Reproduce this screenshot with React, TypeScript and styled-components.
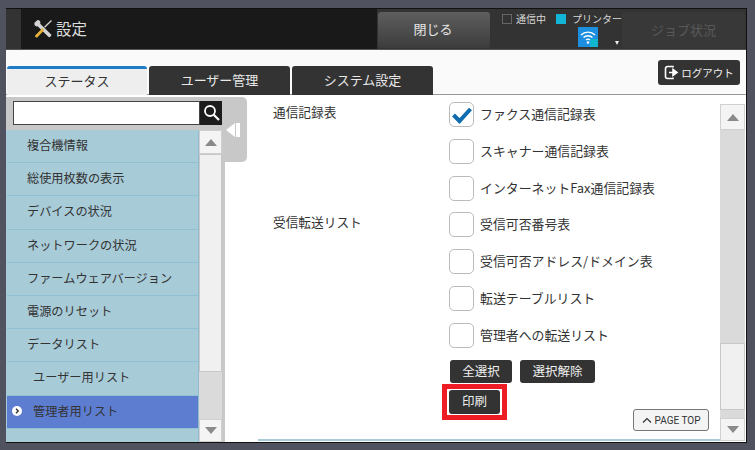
import styled, { createGlobalStyle } from 'styled-components'

const GlobalStyle = createGlobalStyle`
  html, body {
    margin: 0;
    padding: 0;
    background: #50525f;
    font-family: "Noto Sans CJK JP", "Liberation Sans", sans-serif;
  }
`

const menuItems = [
  { label: '複合機情報' },
  { label: '総使用枚数の表示' },
  { label: 'デバイスの状況' },
  { label: 'ネットワークの状況' },
  { label: 'ファームウェアバージョン' },
  { label: '電源のリセット' },
  { label: 'データリスト' },
  { label: 'ユーザー用リスト', sub: true },
  { label: '管理者用リスト', sub: true, active: true },
]

const sections = [
  { title: '通信記録表', items: ['ファクス通信記録表', 'スキャナー通信記録表', 'インターネットFax通信記録表'] },
  { title: '受信転送リスト', items: ['受信可否番号表', '受信可否アドレス/ドメイン表', '転送テーブルリスト', '管理者への転送リスト'] },
]

const Triangle = ({ down }: { down?: boolean }) => (
  <svg width="14" height="9" viewBox="0 0 14 9">
    <path d={down ? 'M1 1h12L7 8z' : 'M7 1l6 7H1z'} fill="#8a8a8a" />
  </svg>
)

const App = () => {
  return (
    <>
      <GlobalStyle />
      <Screen>
        <Header>
          <TitleArea>
            <svg width="20" height="20" viewBox="0 0 20 20">
              <path d="M1.5 3.8L4.2 1.2c1.6-.4 3.2.8 3.2 2.6l-.2.9 11 10.8c.8.9-1.6 3.4-2.6 2.6L4.6 7.2l-.9.2C2 7.4.9 5.6 1.5 3.8z" fill="#d4d4d4" />
              <path d="M2.2 16.6l7-7.4 2 2-7 7.2c-1 .7-2.8-.8-2-1.8z" fill="#e8b23a" />
              <path d="M11.5 8.2L18.5 1.5" stroke="#d4d4d4" strokeWidth="1.3" />
            </svg>
            <Title>設定</Title>
          </TitleArea>
          <HeaderRight>
            <CloseButton>閉じる</CloseButton>
            <Status>
              <StatusRow>
                <StatusBox />
                <StatusText>通信中</StatusText>
                <StatusBox $on />
                <StatusText>プリンター</StatusText>
              </StatusRow>
              <WifiRow>
                <svg width="20" height="20" viewBox="0 0 20 20">
                  <rect width="20" height="20" fill="#1d8fe0" />
                  <path d="M3 8a10 10 0 0 1 14 0M5.5 10.5a6.5 6.5 0 0 1 9 0M8 13a3 3 0 0 1 4 0" stroke="#fff" strokeWidth="1.4" fill="none" />
                  <circle cx="10" cy="15.5" r="1.3" fill="#fff" />
                  <rect x="12" y="12" width="8" height="8" fill="#12b5d0" />
                </svg>
                <Caret />
              </WifiRow>
            </Status>
            <JobButton>ジョブ状況</JobButton>
          </HeaderRight>
        </Header>

        <TabBar>
          <Tabs>
            <Tab $active>ステータス</Tab>
            <Tab>ユーザー管理</Tab>
            <Tab>システム設定</Tab>
          </Tabs>
          <LogoutButton>
            <svg width="15" height="15" viewBox="0 0 15 15">
              <path d="M9 2.5V1.5H3.5a2 2 0 0 0-2 2v8a2 2 0 0 0 2 2H9v-1" fill="none" stroke="#fff" strokeWidth="1.6" />
              <path d="M5 7.5h5M9 4.5l4 3-4 3z" stroke="#fff" strokeWidth="1.6" fill="#fff" />
            </svg>
            ログアウト
          </LogoutButton>
        </TabBar>

        <Body>
          <Sidebar>
            <SearchRow>
              <SearchInput />
              <SearchButton>
                <svg width="18" height="18" viewBox="0 0 18 18">
                  <circle cx="7" cy="7" r="5" fill="none" stroke="#fff" strokeWidth="1.8" />
                  <path d="M10.5 10.5l5.5 5.5" stroke="#fff" strokeWidth="2.2" />
                </svg>
              </SearchButton>
            </SearchRow>
            <MenuArea>
              <Menu>
                {menuItems.map((item) => (
                  <MenuItem key={item.label} $sub={item.sub} $active={item.active}>
                    {item.active && (
                      <ActiveMark>
                        <svg width="10" height="10" viewBox="0 0 10 10">
                          <circle cx="5" cy="5" r="5" fill="#fff" />
                          <path d="M4 2.8L6.2 5 4 7.2" stroke="#333" strokeWidth="1.4" fill="none" />
                        </svg>
                      </ActiveMark>
                    )}
                    {item.label}
                  </MenuItem>
                ))}
              </Menu>
              <MenuScroll>
                <ArrowButton><Triangle /></ArrowButton>
                <ScrollThumb $flex />
                <ScrollTrack $height={47} />
                <ArrowButton $bottom><Triangle down /></ArrowButton>
              </MenuScroll>
            </MenuArea>
          </Sidebar>
          <CollapseHandle>
            <svg width="14" height="14" viewBox="0 0 14 14">
              <path d="M9 0v14L0 7z" fill="#fff" />
              <rect x="10" y="0" width="4" height="14" fill="#fff" />
            </svg>
          </CollapseHandle>

          <Main>
            <Form>
              {sections.map((section) => (
                <Section key={section.title}>
                  <SectionTitle>{section.title}</SectionTitle>
                  <div>
                    {section.items.map((label, i) => (
                      <CheckRow key={label}>
                        <CheckBox>
                          {section.title === '通信記録表' && i === 0 && (
                            <svg width="22" height="18" viewBox="0 0 22 18">
                              <path d="M2.5 9l6 6L19.5 3" stroke="#0f6cb0" strokeWidth="4" fill="none" />
                            </svg>
                          )}
                        </CheckBox>
                        <CheckLabel>{label}</CheckLabel>
                      </CheckRow>
                    ))}
                  </div>
                </Section>
              ))}
              <Actions>
                <DarkButton>全選択</DarkButton>
                <DarkButton $wide>選択解除</DarkButton>
              </Actions>
              <PrintHighlight>
                <PrintButton>印刷</PrintButton>
              </PrintHighlight>
              <PageTop>
                <svg width="10" height="6" viewBox="0 0 10 6">
                  <path d="M1 5.5L5 1.5l4 4" stroke="#333" strokeWidth="1.2" fill="none" />
                </svg>
                PAGE TOP
              </PageTop>
              <BottomRule />
            </Form>
            <MainScroll>
              <ArrowButton $tall><Triangle /></ArrowButton>
              <ScrollTrack $flex />
              <ScrollThumb $height={67} />
              <ScrollTrack $height={8} />
              <ArrowButton $bottom><Triangle down /></ArrowButton>
            </MainScroll>
          </Main>
        </Body>
      </Screen>
    </>
  )
}

const Screen = styled.div`
  width: 741px;
  height: 435px;
  margin: 8px 0 0 6px;
  border-top: 1px solid #111;
  border-right: 1px solid #111;
  border-bottom: 1px solid #111;
  box-sizing: border-box;
  background: #fff;
  display: flex;
  flex-direction: column;
  overflow: hidden;
`

const Header = styled.div`
  height: 41px;
  flex-shrink: 0;
  display: flex;
  background: #333;
  border-bottom: 1px solid #555;
  box-sizing: border-box;
`

const TitleArea = styled.div`
  width: 356px;
  margin-left: 15px;
  background: #191919;
  display: flex;
  align-items: center;
  padding-left: 12px;
  gap: 3px;
  box-sizing: border-box;
`

const Title = styled.span`
  font-size: 15.5px;
  color: #dcdcdc;
  padding-bottom: 2px;
`

const HeaderRight = styled.div`
  flex: 1;
  display: flex;
  align-items: stretch;
  padding: 3px 1px 1px 0;
`

const CloseButton = styled.div`
  width: 112px;
  margin-left: 1px;
  padding: 0 2px 3px 0;
  box-sizing: border-box;
  border-radius: 3px;
  background: linear-gradient(#5e5e5e, #3c3c3c);
  color: #e6e6e6;
  font-size: 13px;
  display: flex;
  align-items: center;
  justify-content: center;
`

const Status = styled.div`
  width: 132px;
  padding-left: 12px;
  box-sizing: border-box;
`

const StatusRow = styled.div`
  display: flex;
  align-items: center;
  height: 15px;
  margin-top: -1px;
`

const StatusBox = styled.span<{ $on?: boolean }>`
  width: 10px;
  height: 10px;
  box-sizing: border-box;
  background: ${(props) => (props.$on ? '#12b5d6' : 'transparent')};
  border: 1px solid ${(props) => (props.$on ? '#12b5d6' : '#666')};
`

const StatusText = styled.span`
  font-size: 10px;
  color: #d8d8d8;
  margin: 0 10px 0 4px;
  white-space: nowrap;
  &:last-child {
    margin-right: 0;
    margin-left: 6px;
  }
`

const WifiRow = styled.div`
  display: flex;
  align-items: flex-end;
  padding: 1px 0 0 76px;
`

const Caret = styled.span`
  width: 0;
  height: 0;
  margin-left: 17px;
  margin-bottom: 2px;
  border-left: 2.5px solid transparent;
  border-right: 2.5px solid transparent;
  border-top: 4px solid #eee;
`

const JobButton = styled.div`
  flex: 1;
  padding-bottom: 2px;
  border-radius: 3px;
  background: #383838;
  color: #585858;
  font-size: 13px;
  display: flex;
  align-items: center;
  justify-content: center;
`

const TabBar = styled.div`
  height: 45px;
  flex-shrink: 0;
  display: flex;
  align-items: flex-end;
  justify-content: space-between;
  background: #fafafa;
  box-shadow: inset 0 -1px 0 #999;
  padding-right: 6px;
`

const Tabs = styled.div`
  display: flex;
  gap: 2px;
  padding-left: 1px;
`

const Tab = styled.div<{ $active?: boolean }>`
  width: ${(props) => (props.$active ? '140px' : '141px')};
  height: 29px;
  padding-bottom: ${(props) => (props.$active ? '3px' : '2px')};
  box-sizing: border-box;
  border-radius: 3px 3px 0 0;
  display: flex;
  align-items: center;
  justify-content: center;
  font-size: 13px;
  background: ${(props) => (props.$active ? '#eeeeee' : '#333333')};
  color: ${(props) => (props.$active ? '#333' : '#e8e8e8')};
  border-top: ${(props) => (props.$active ? '3px solid #1e7cc8' : 'none')};
`

const LogoutButton = styled.div`
  width: 82px;
  height: 25px;
  margin-bottom: 10px;
  box-sizing: border-box;
  border-radius: 3px;
  background: #333;
  color: #f0f0f0;
  font-size: 10.5px;
  display: flex;
  align-items: center;
  justify-content: center;
  gap: 2px;
`

const Body = styled.div`
  flex: 1;
  min-height: 0;
  display: flex;
  align-items: flex-start;
  padding-top: 2px;
  background: #fff;
`

const Sidebar = styled.div`
  width: 219px;
  height: 345px;
  flex-shrink: 0;
  display: flex;
  flex-direction: column;
  background: #c8c8c8;
`

const SearchRow = styled.div`
  height: 33px;
  flex-shrink: 0;
  display: flex;
  padding: 4px 0 0 7px;
  box-sizing: border-box;
`

const SearchInput = styled.div`
  width: 187px;
  height: 24px;
  box-sizing: border-box;
  background: #fff;
  border: 1px solid #444;
`

const SearchButton = styled.div`
  width: 23px;
  height: 24px;
  background: #1c1c1c;
  display: flex;
  align-items: center;
  justify-content: center;
`

const MenuArea = styled.div`
  flex: 1;
  min-height: 0;
  display: flex;
  padding-right: 3px;
`

const Menu = styled.div`
  width: 193px;
  background: #a8cbd8;
  padding-left: 1px;
  box-sizing: border-box;
  border-right: 1px solid #8fbdcf;
`

const MenuItem = styled.div<{ $sub?: boolean; $active?: boolean }>`
  position: relative;
  height: 33.2px;
  padding-bottom: 2px;
  box-sizing: border-box;
  display: flex;
  align-items: center;
  padding-left: ${(props) => (props.$sub ? '26px' : '20px')};
  font-size: 12.2px;
  color: #333;
  border-bottom: 1px solid #8fbfd0;
  background: ${(props) => (props.$active ? '#5d7dd1' : 'transparent')};
`

const ActiveMark = styled.span`
  position: absolute;
  left: 5px;
  top: 10px;
  display: flex;
`

const MenuScroll = styled.div`
  flex: 1;
  display: flex;
  flex-direction: column;
`

const ArrowButton = styled.div<{ $bottom?: boolean; $tall?: boolean }>`
  height: ${(props) => (props.$tall ? '26px' : props.$bottom ? '23px' : '24px')};
  flex-shrink: 0;
  box-sizing: border-box;
  background: #f4f4f4;
  border: 1px solid #d0d0d0;
  display: flex;
  align-items: center;
  justify-content: center;
`

const ScrollThumb = styled.div<{ $height?: number; $flex?: boolean }>`
  flex: ${(props) => (props.$flex ? 1 : 'none')};
  height: ${(props) => (props.$height ? `${props.$height}px` : 'auto')};
  box-sizing: border-box;
  background: #f0f0f0;
  border: 1px solid #c8c8c8;
`

const ScrollTrack = styled.div<{ $height?: number; $flex?: boolean }>`
  flex: ${(props) => (props.$flex ? 1 : 'none')};
  height: ${(props) => (props.$height ? `${props.$height}px` : 'auto')};
  background: #dadada;
`

const CollapseHandle = styled.div`
  width: 25px;
  height: 65px;
  flex-shrink: 0;
  margin-left: -3px;
  background: #c8c8c8;
  border-radius: 0 5px 5px 0;
  display: flex;
  justify-content: flex-start;
  padding: 26px 0 0 4px;
  box-sizing: border-box;
`

const Main = styled.div`
  flex: 1;
  min-width: 0;
  height: 100%;
  display: flex;
  padding: 0 1px 0 11px;
  box-sizing: border-box;
`

const Form = styled.div`
  position: relative;
  flex: 1;
  min-width: 0;
  height: 344px;
  padding: 5px 0 0 15px;
  box-sizing: border-box;
  background: #fff;
`

const Section = styled.div`
  display: flex;
`

const SectionTitle = styled.div`
  width: 176px;
  flex-shrink: 0;
  padding-top: 1px;
  font-size: 12.7px;
  line-height: 18px;
  color: #333;
`

const CheckRow = styled.div`
  height: 36.8px;
  display: flex;
  align-items: flex-start;
`

const CheckBox = styled.div`
  width: 25px;
  height: 25px;
  box-sizing: border-box;
  background: #fff;
  border: 1px solid #bbb;
  border-radius: 5px;
  display: flex;
  align-items: center;
  justify-content: center;
`

const CheckLabel = styled.span`
  margin-left: 6px;
  font-size: 12.9px;
  line-height: 24px;
  color: #333;
  white-space: nowrap;
`

const Actions = styled.div`
  display: flex;
  gap: 8px;
  margin: 0 0 0 177px;
`

const DarkButton = styled.div<{ $wide?: boolean }>`
  width: ${(props) => (props.$wide ? '75px' : '62px')};
  height: 23px;
  padding-bottom: 2px;
  box-sizing: border-box;
  border-radius: 3px;
  background: #333;
  color: #f0f0f0;
  font-size: 12.5px;
  display: flex;
  align-items: center;
  justify-content: center;
`

const PrintHighlight = styled.div`
  width: 65px;
  height: 36px;
  margin: 1px 0 0 169px;
  box-sizing: border-box;
  border: 5px solid #ee1c25;
  padding: 1px 2px;
  background: #fff;
`

const PrintButton = styled.div`
  height: 100%;
  padding-bottom: 2px;
  box-sizing: border-box;
  border-radius: 3px;
  background: #333;
  color: #eee;
  font-size: 12.5px;
  display: flex;
  align-items: center;
  justify-content: center;
`

const PageTop = styled.div`
  position: absolute;
  left: 375px;
  top: 312px;
  width: 76px;
  height: 22px;
  box-sizing: border-box;
  border: 1px solid #777;
  border-radius: 3px;
  background: #f4f4f4;
  color: #333;
  font-family: "Roboto", "Liberation Sans", sans-serif;
  font-size: 10px;
  display: flex;
  align-items: center;
  justify-content: center;
  gap: 3px;
`

const BottomRule = styled.div`
  position: absolute;
  left: 0;
  right: 0;
  bottom: 0;
  height: 2px;
  background: #a8cbd8;
`

const MainScroll = styled.div`
  width: 25px;
  height: 344px;
  flex-shrink: 0;
  padding-top: 7px;
  box-sizing: border-box;
  display: flex;
  flex-direction: column;
`

export default App
